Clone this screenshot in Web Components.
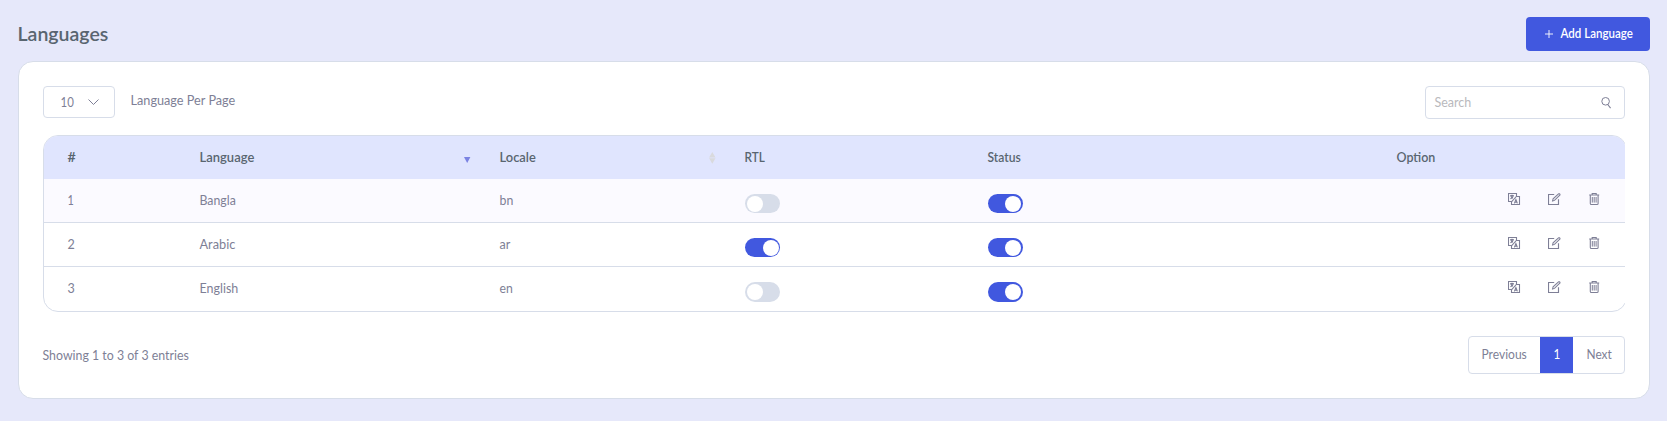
<!DOCTYPE html>
<html lang="en">
<head>
<meta charset="utf-8">
<title>Languages</title>
<style>
html,body{margin:0;height:100%;background:#e6e8fa}
body{font:400 13.6px/20px Lato,"Open Sans",sans-serif;color:#7e7f96;overflow:hidden}
</style>
</head>
<body>
<language-page></language-page>
<script>
const define = (name, html, setup) => {
  const t = document.createElement('template');
  t.innerHTML = html;
  customElements.define(name, class extends HTMLElement {
    constructor() { super(); this.attachShadow({ mode: 'open' }).append(t.content.cloneNode(true)); }
    connectedCallback() { if (setup) setup(this, this.shadowRoot); }
  });
};

/* A label condensed or widened to occupy a given width */
define('ui-label', `<style>
:host{display:inline-block;white-space:nowrap;flex:none}
span{display:inline-block;transform-origin:0 50%}
</style><span><slot></slot></span>`, (el, root) => {
  const w = parseFloat(el.getAttribute('w'));
  const s = root.querySelector('span');
  el.style.width = w + 'px';
  s.style.transform = 'none';
  const natural = s.getBoundingClientRect().width;
  if (natural) s.style.transform = `translateX(-.5px) scaleX(${((w + .3) / natural).toFixed(4)})`;
});

const icons = {
  plus: [8, 8, '<path d="M4 0v8M0 4h8" stroke-width=".9"/>'],
  chevron: [11, 6, '<path d="M.5.5l5 5 5-5" stroke-width="1"/>'],
  search: [11, 12, '<circle cx="4.6" cy="4.3" r="3.8"/><path d="M6.7 7.5l2.9 3.7" stroke-width="1.1"/>'],
  translate: [13, 13, '<path d="M3.5 8.5h-3v-8h8v3M3.5 8.5v3h8v-8h-3M8.3 3.5L3.7 8.7" stroke-width="1.1"/><path d="M2.2 2.6h3.6M4 1.8v.9M5.2 2.8C4.9 4.3 3.9 5.2 2.4 5.8M2.9 3c.5 1.2 1.1 1.8 1.9 2.2M6.4 10.4l1.5-3.9 1.5 3.9M6.9 9.2h2" stroke-width="1.1"/>'],
  edit: [13, 13, '<path d="M6.2 1.5H.5v10h10V6.2" stroke-width="1.15"/><path d="M4.6 7.9l.5-2L10.5.8c.6-.6 2 .5 1.3 1.4L6.5 7.4z" stroke-width="1.05"/>'],
  trash: [11, 13, '<path d="M.2 2h10M3.2 1.9V.5h4v1.4M1.3 2.2v8.2q0 1.1 1.1 1.1H8q1.1 0 1.1-1.1V2.2" stroke-width="1.1"/><path d="M3.3 4v5.6M5.2 4v5.6M7.1 4v5.6" stroke-width="1"/>'],
  down: [7, 6, '<path d="M0 0h6.4L3.2 5.9z" fill="currentColor" stroke="none"/>'],
  both: [7, 12, '<path d="M.1 5.4L3.3 0l3.2 5.4zM.1 6.3h6.4L3.3 11.8z" fill="currentColor" stroke="none"/>']
};
define('ui-icon', `<style>:host{display:block;flex:none}svg{display:block;fill:none;stroke:currentColor;stroke-width:1}</style><div></div>`, (el, root) => {
  const [w, h, body] = icons[el.getAttribute('name')];
  root.querySelector('div').innerHTML = `<svg width="${w}" height="${h}" viewBox="0 0 ${w} ${h}">${body}</svg>`;
});

define('ui-toggle', `<style>
:host{display:flex;box-sizing:border-box;width:35px;height:19px;border-radius:10px;background:#d7dde9;padding:2px 2px 1px 2px}
:host([tall]){height:20px}
:host([on]){background:#4158df;justify-content:flex-end}
i{width:16px;height:16px;border-radius:50%;background:#fff}
</style><i></i>`);

define('ui-button', `<style>
:host{display:flex;box-sizing:border-box;width:124px;height:34px;border-radius:4px;background:#4158df;color:#fff;align-items:center;padding:0 0 0 18.5px;gap:8.5px;font-size:12.6px;font-weight:600}
ui-icon{margin-top:-1px}
</style><ui-icon name="plus"></ui-icon><slot></slot>`);

define('page-select', `<style>
:host{display:flex;align-items:center;gap:16px}
div{box-sizing:border-box;width:72px;height:32px;border:1px solid #d7dde9;border-radius:4px;display:flex;align-items:center;justify-content:space-between;padding:0 15px 1px 16.5px}
.t{padding-bottom:4px}
</style><div><ui-label w="13">10</ui-label><ui-icon name="chevron"></ui-icon></div><ui-label class="t" w="104.5">Language Per Page</ui-label>`);

define('search-box', `<style>
:host{box-sizing:border-box;width:200px;height:33px;border:1px solid #d7dde9;border-radius:4px;display:flex;align-items:center;justify-content:space-between;padding:0 12px 0 8.5px}
ui-label{color:#b9b9bd;padding-bottom:1px}
</style><ui-label w="36.5">Search</ui-label><ui-icon name="search"></ui-icon>`);

define('table-head', `<style>
:host{display:grid;grid-template-columns:132px 300px 245px 243px 1fr;height:43px;padding-left:24px;align-items:center;background:#e0e5fe;color:#596570;font-weight:600}
div{display:flex;justify-content:space-between;align-items:center}
ui-label{padding-bottom:2px}
.a,.b{padding-right:29px}
.a ui-icon{color:#7b83e2;padding-top:5px}.b ui-icon{color:#d9dadd;margin-top:1px}
.s{justify-content:flex-start}
.o{margin-left:376px}
</style><div><ui-label w="8">#</ui-label></div><div class="a"><ui-label w="54.5">Language</ui-label><ui-icon name="down"></ui-icon></div><div class="b"><ui-label w="36">Locale</ui-label><ui-icon name="both"></ui-icon></div><div><ui-label w="20">RTL</ui-label></div><div class="s"><ui-label w="33">Status</ui-label><ui-label class="o" w="38.5">Option</ui-label></div>`);

define('table-row', `<style>
:host{display:grid;grid-template-columns:132px 300px 245px 243px 1fr;height:43px;padding-left:24px;align-items:start;border-bottom:1px solid #d7dde9}
:host([striped]){background:#fbfaff}
:host([last]){height:44px;border:0}
ui-label{padding-top:11px}
ui-toggle{margin-top:15px}
#r[on]{padding-right:1px}
.s{display:flex;align-items:flex-start;justify-content:space-between}
.i{display:flex;margin:14px 26px 0 0}
.i ui-icon + ui-icon{margin-left:27px}
.i ui-icon:last-child{margin-left:28px}
</style><ui-label id="n"></ui-label><ui-label id="l"></ui-label><ui-label id="c"></ui-label><ui-toggle id="r"></ui-toggle><div class="s"><ui-toggle on id="s"></ui-toggle><div class="i"><ui-icon name="translate"></ui-icon><ui-icon name="edit"></ui-icon><ui-icon name="trash"></ui-icon></div></div>`, (el, root) => {
  const set = (id, attr) => {
    const [text, w] = el.getAttribute(attr).split('|');
    const fresh = document.createElement('ui-label');
    fresh.textContent = text;
    fresh.setAttribute('w', w);
    root.getElementById(id).replaceWith(fresh);
  };
  set('n', 'num'); set('l', 'lang'); set('c', 'code');
  if (el.hasAttribute('rtl')) root.getElementById('r').setAttribute('on', '');
  if (el.hasAttribute('last')) root.querySelectorAll('ui-toggle').forEach(t => t.setAttribute('tall', ''));
});

define('language-table', `<style>
:host{display:block;overflow:hidden;width:1582px}
div{box-sizing:border-box;width:1584px;border:1px solid #d7dde9;border-radius:15px;overflow:hidden}
</style><div><table-head></table-head>
<table-row striped num="1|6" lang="Bangla|36" code="bn|13.5"></table-row>
<table-row rtl num="2|7" lang="Arabic|35.5" code="ar|10.5"></table-row>
<table-row last num="3|7" lang="English|38.5" code="en|13"></table-row></div>`);

define('page-nav', `<style>
:host{box-sizing:border-box;display:flex;width:157px;height:38px;border:1px solid #d7dde9;border-radius:4px;line-height:35px}
span{box-sizing:border-box;padding-left:13px;width:71px}
.on{background:#4158df;color:#fff;width:33px;padding-left:14px}
.n{width:51px;padding-left:13.5px}
</style><span><ui-label w="45">Previous</ui-label></span><span class="on"><ui-label w="6.5">1</ui-label></span><span class="n"><ui-label w="25">Next</ui-label></span>`);

define('language-page', `<style>
:host{display:block;padding:17px 17px 0 18px}
header,.tools,footer{display:flex;justify-content:space-between}
header{height:44px;align-items:flex-start}
h1{margin:4px 0 0;font-size:19.5px;line-height:26px;font-weight:600;color:#596570}
main{box-sizing:border-box;height:338px;background:#fff;border:1px solid #d7dde9;border-radius:15px;padding:24px}
.tools{height:49px;align-items:flex-start}
footer{padding-top:24px}
footer > ui-label{padding-top:9px}
</style><header><h1><ui-label w="90.5">Languages</ui-label></h1><ui-button><ui-label w="72">Add Language</ui-label></ui-button></header>
<main><div class="tools"><page-select></page-select><search-box></search-box></div><language-table></language-table><footer><ui-label w="146">Showing 1 to 3 of 3 entries</ui-label><page-nav></page-nav></footer></main>`);
</script>
</body>
</html>
